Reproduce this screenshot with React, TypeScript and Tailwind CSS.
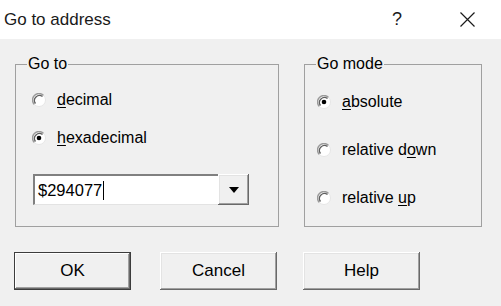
import React from "react";

function Radio({ checked }: { checked?: boolean }) {
  return (
    <svg width="14" height="14" viewBox="0 0 14 14" className="shrink-0">
      <circle cx="7" cy="7" r="6.5" fill="#fff" />
      <path d="M2.4 11.6 A6.5 6.5 0 0 1 11.6 2.4" fill="none" stroke="#9a9a9a" strokeWidth="1.4" />
      <path d="M3.5 10.5 A5 5 0 0 1 10.5 3.5" fill="none" stroke="#5f5f5f" strokeWidth="1.3" />
      <path d="M11.6 2.4 A6.5 6.5 0 0 1 2.4 11.6" fill="none" stroke="#e6e6e6" strokeWidth="1" />
      {checked && <circle cx="7" cy="7" r="2.3" fill="#000" />}
    </svg>
  );
}

function Option({ checked, children }: { checked?: boolean; children: React.ReactNode }) {
  return (
    <div className="flex items-center h-[24px] gap-[11px]">
      <Radio checked={checked} />
      <span className="leading-none">{children}</span>
    </div>
  );
}

function Button({ label, primary }: { label: string; primary?: boolean }) {
  return (
    <button
      className={
        "w-[117px] h-[38px] bg-[#f0f0f0] text-[17px] text-black " +
        (primary
          ? "border border-[#3c3c3c] shadow-[inset_-1px_-1px_#696969,inset_1px_1px_#fff,inset_-2px_-2px_#a0a0a0]"
          : "shadow-[inset_-1px_-1px_#696969,inset_1px_1px_#fff,inset_-2px_-2px_#a0a0a0,inset_2px_2px_#e3e3e3]")
      }
    >
      {label}
    </button>
  );
}

export default function App() {
  return (
    <div className="w-[501px] h-[306px] bg-[#f0f0f0] flex flex-col font-['Liberation_Sans',Arial,sans-serif] text-black overflow-hidden">
      <div className="h-[39px] bg-white flex items-center justify-between pl-[4px] pr-[26px]">
        <span className="text-[17px] text-[#1a1a1a]">Go to address</span>
        <div className="flex items-center gap-[58px]">
          <span className="text-[18px] text-[#1a1a1a]">?</span>
          <svg width="15" height="15" viewBox="0 0 15 15">
            <path d="M0.5 0.5 L14.5 14.5 M14.5 0.5 L0.5 14.5" stroke="#1a1a1a" strokeWidth="1.2" />
          </svg>
        </div>
      </div>

      <div className="flex items-stretch pl-[15px] mt-[16px] text-[16px]">
        <fieldset className="w-[264px] border border-[#a0a0a0] pl-[16px] pb-[21px]">
          <legend className="-ml-[5px] px-[1px] leading-[18px]">Go to</legend>
          <div className="flex flex-col mt-[15px]">
            <Option>
              <u className="underline-offset-2">d</u>ecimal
            </Option>
            <div className="mt-[14px]">
              <Option checked>
                <u className="underline-offset-2">h</u>exadecimal
              </Option>
            </div>
            <div className="mt-[24px] ml-[1px] flex h-[31px] w-[216px]">
              <div className="flex-1 bg-white flex items-center pl-[3px] border-t-2 border-l-2 border-t-[#808080] border-l-[#808080] border-b border-r-0 border-b-[#e3e3e3]">
                <span className="text-[16.5px] leading-none">$294077</span>
                <span className="w-[1px] h-[19px] bg-black ml-[1px]" />
              </div>
              <div className="w-[31px] h-[31px] flex items-center justify-center shadow-[inset_-1px_-1px_#696969,inset_1px_1px_#fff,inset_-2px_-2px_#a0a0a0,inset_2px_2px_#e3e3e3]">
                <svg width="10" height="6" viewBox="0 0 10 6">
                  <path d="M0 0 H10 L5 6 Z" fill="#000" />
                </svg>
              </div>
            </div>
          </div>
        </fieldset>

        <fieldset className="ml-[25px] w-[178px] border border-[#a0a0a0] pl-[12px] pb-[16px]">
          <legend className="-ml-[1px] px-[1px] leading-[18px]">Go mode</legend>
          <div className="flex flex-col mt-[17px] gap-[24px]">
            <Option checked>
              <u className="underline-offset-2">a</u>bsolute
            </Option>
            <Option>
              relative d<u className="underline-offset-2">o</u>wn
            </Option>
            <Option>
              relative <u className="underline-offset-2">u</u>p
            </Option>
          </div>
        </fieldset>
      </div>

      <div className="flex mt-[25px] pl-[14px]">
        <Button label="OK" primary />
        <div className="ml-[29px]">
          <Button label="Cancel" />
        </div>
        <div className="ml-[26px]">
          <Button label="Help" />
        </div>
      </div>
    </div>
  );
}
